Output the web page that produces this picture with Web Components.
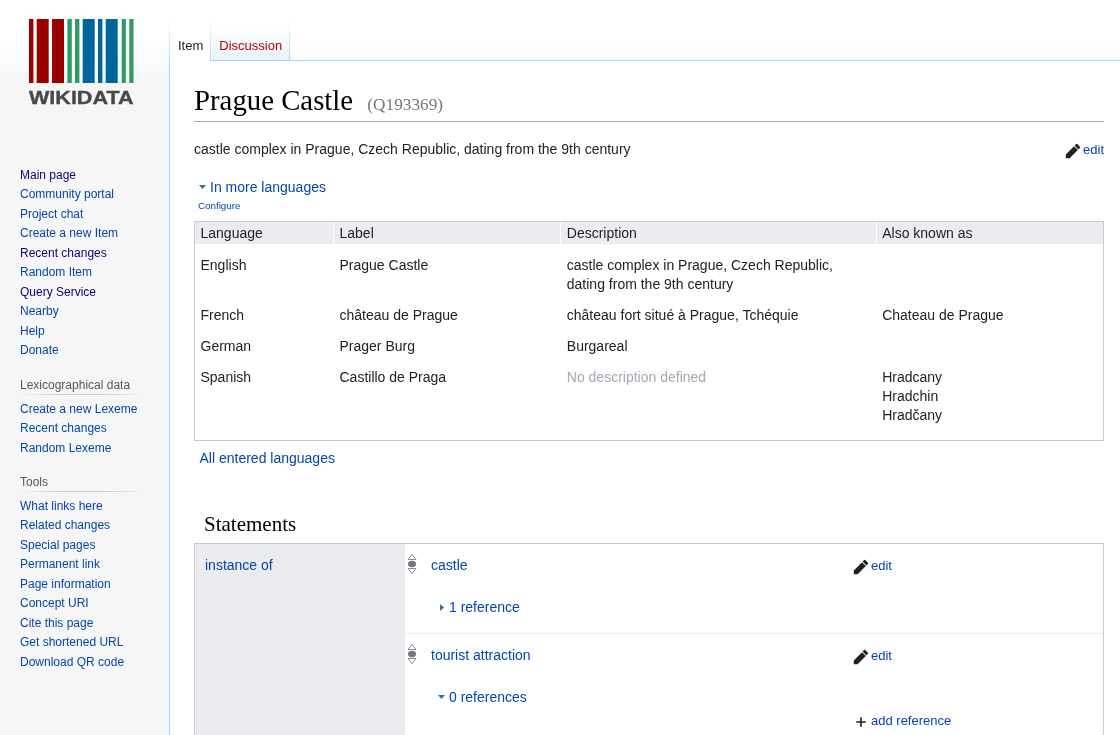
<!DOCTYPE html>
<html lang="en">
<head>
<meta charset="utf-8">
<title>Prague Castle - Wikidata</title>
<style>
html, body {
    margin: 0;
    height: 100%;
    overflow: hidden;
}
body {
    background: linear-gradient(#fff 50%, #f6f6f6 100%) 0 0 / 100% 80px no-repeat, #f6f6f6;
    font-family: "Liberation Sans", Arial, sans-serif;
    color: #222;
}
wd-page {
    will-change: opacity;
}
wd-term-row [slot] {
    display: block;
}
.muted {
    color: #a2a9b1;
}
</style>
</head>
<body>

<wd-page>
    <wd-sidebar slot="side">
        <wd-logo></wd-logo>
        <wd-portal>
            <a class="seen" href="#">Main page</a>
            <a href="#">Community portal</a>
            <a href="#">Project chat</a>
            <a href="#">Create a new Item</a>
            <a class="seen" href="#">Recent changes</a>
            <a href="#">Random Item</a>
            <a class="seen" href="#">Query Service</a>
            <a href="#">Nearby</a>
            <a href="#">Help</a>
            <a href="#">Donate</a>
        </wd-portal>
        <wd-portal heading="Lexicographical data">
            <a href="#">Create a new Lexeme</a>
            <a href="#">Recent changes</a>
            <a href="#">Random Lexeme</a>
        </wd-portal>
        <wd-portal heading="Tools">
            <a href="#">What links here</a>
            <a href="#">Related changes</a>
            <a href="#">Special pages</a>
            <a href="#">Permanent link</a>
            <a href="#">Page information</a>
            <a href="#">Concept URI</a>
            <a href="#">Cite this page</a>
            <a href="#">Get shortened URL</a>
            <a href="#">Download QR code</a>
        </wd-portal>
    </wd-sidebar>

    <wd-tabs slot="tabs"></wd-tabs>

    <wd-heading label="Prague Castle" qid="(Q193369)"></wd-heading>
    <wd-description>castle complex in Prague, Czech Republic, dating from the 9th century</wd-description>

    <wd-terms>
        <wd-term-row>
            <div slot="lang">English</div>
            <div slot="label">Prague Castle</div>
            <div slot="desc">castle complex in Prague, Czech Republic,<br>dating from the 9th century</div>
        </wd-term-row>
        <wd-term-row>
            <div slot="lang">French</div>
            <div slot="label">château de Prague</div>
            <div slot="desc">château fort situé à Prague, Tchéquie</div>
            <div slot="also">Chateau de Prague</div>
        </wd-term-row>
        <wd-term-row>
            <div slot="lang">German</div>
            <div slot="label">Prager Burg</div>
            <div slot="desc">Burgareal</div>
        </wd-term-row>
        <wd-term-row>
            <div slot="lang">Spanish</div>
            <div slot="label">Castillo de Praga</div>
            <div slot="desc" class="muted">No description defined</div>
            <div slot="also">Hradcany</div>
            <div slot="also">Hradchin</div>
            <div slot="also">Hradčany</div>
        </wd-term-row>
    </wd-terms>

    <wd-statement-group property="instance of">
        <wd-statement value="castle" refs="1 reference"></wd-statement>
        <wd-statement value="tourist attraction" refs="0 references" open></wd-statement>
    </wd-statement-group>
</wd-page>

<script>
const PENCIL = '<svg width="16" height="16" viewBox="0 0 20 20" fill="#202122"><path d="M16.77 8l1.94-2a1 1 0 0 0 0-1.41l-3.34-3.3a1 1 0 0 0-1.41 0L12 3.23zM11.3 3.95 1 14.25V19h4.75L16.05 8.7z"/></svg>';
const PLUS = '<svg width="16" height="16" viewBox="0 0 20 20" fill="#202122"><path d="M11 9V4H9v5H4v2h5v5h2v-5h5V9z"/></svg>';
const ARROW_DOWN = '<svg width="7" height="4" viewBox="0 0 7 4" fill="#2f6f9f"><path d="M0 0h7L3.5 4z"/></svg>';
const ARROW_RIGHT = '<svg width="4" height="7" viewBox="0 0 4 7" fill="#2f6f9f"><path d="M0 0v7l4-3.5z"/></svg>';

function define(name, html, setup) {
    const template = document.createElement('template');
    template.innerHTML = html;
    customElements.define(name, class extends HTMLElement {
        constructor() {
            super();
            this.attachShadow({ mode: 'open' });
            this.shadowRoot.appendChild(template.content.cloneNode(true));
        }
        connectedCallback() {
            if (setup) setup(this.shadowRoot, this);
        }
    });
}

define('wd-page', `
<style>
:host {
    display: grid;
    grid-template-columns: 169px 1fr;
    grid-template-rows: 61px 1fr;
    height: 100vh;
}
.side { grid-row: 1 / 3; }
.content {
    background: #fff;
    border-left: 1px solid #a7d7f9;
    padding: 20px 16px 24px 24px;
    min-width: 0;
}
</style>
<div class="side"><slot name="side"></slot></div>
<div><slot name="tabs"></slot></div>
<div class="content"><slot></slot></div>
`);

define('wd-sidebar', `
<style>
:host {
    display: block;
    font-size: 12px;
}
</style>
<slot></slot>
`);

define('wd-logo', `
<style>
:host {
    display: block;
    height: 165.75px;
}
svg { display: block; }
</style>
<svg width="169" height="110" viewBox="0 0 169 110">
    <g fill="#990000">
        <rect x="29" y="19" width="4.4" height="64"/>
        <rect x="36.7" y="19" width="12" height="64"/>
        <rect x="52" y="19" width="12" height="64"/>
    </g>
    <g fill="#339966">
        <rect x="67.4" y="19" width="4.4" height="64"/>
        <rect x="75" y="19" width="4.4" height="64"/>
        <rect x="121.7" y="19" width="4.2" height="64"/>
        <rect x="129.3" y="19" width="4.2" height="64"/>
    </g>
    <g fill="#006699">
        <rect x="82.7" y="19" width="12" height="64"/>
        <rect x="98" y="19" width="4.4" height="64"/>
        <rect x="105.7" y="19" width="12" height="64"/>
    </g>
    <text x="29" y="103.6" font-family="'Liberation Sans', Arial, sans-serif" font-weight="700" font-size="18" fill="#484848" stroke="#484848" stroke-width=".35" textLength="104.5" lengthAdjust="spacingAndGlyphs">WIKIDATA</text>
</svg>
`);

define('wd-portal', `
<style>
:host {
    display: block;
    margin-left: 20px;
}
h3 {
    margin: 15.4px 0 4.4px;
    font: inherit;
    line-height: 18px;
    color: #54595d;
    height: 18px;
    width: 125px;
    padding-bottom: 1px;
    background: linear-gradient(to right, rgba(200,204,209,0) 0, #c8ccd1 33%, #c8ccd1 66%, rgba(200,204,209,0) 100%) 0 100% / 100% 1px no-repeat;
}
.links { display: block; }
::slotted(a) {
    display: block;
    height: 13.5px;
    line-height: 13.5px;
    padding: 3px 0;
    color: #0645ad;
    text-decoration: none;
}
::slotted(a.seen) { color: #0b0080; }
</style>
<h3></h3>
<div class="links"><slot></slot></div>
`, (root, host) => {
    const h = root.querySelector('h3');
    if (host.hasAttribute('heading')) h.textContent = host.getAttribute('heading');
    else h.remove();
});

define('wd-tabs', `
<style>
:host {
    display: flex;
    height: 61px;
    font-size: 13px;
}
.break {
    width: 1px;
    background: linear-gradient(rgba(167,215,249,0) 30%, #a7d7f9 100%);
}
.tab {
    margin-top: 26px;
    box-sizing: border-box;
    height: 35px;
    padding: 12px 7px 0 8px;
    line-height: 15px;
}
.item {
    background: #fff;
    color: #222;
}
.talk {
    color: #ba0000;
    padding: 12px 7px 0 8px;
    background: linear-gradient(#fff, #e8f2f8);
    border-bottom: 1px solid #a7d7f9;
}
.rest {
    flex: 1;
    border-bottom: 1px solid #a7d7f9;
}
</style>
<div class="break"></div>
<div class="tab item">Item</div>
<div class="break"></div>
<div class="tab talk">Discussion</div>
<div class="break"></div>
<div class="rest"></div>
`);

define('wd-heading', `
<style>
:host {
    display: block;
    font-family: "Liberation Serif", "Times New Roman", serif;
    border-bottom: 1px solid #a2a9b1;
    box-sizing: content-box;
    height: 39px;
    padding-top: 1px;
    line-height: 37.5px;
    font-size: 28.8px;
    color: #000;
    white-space: nowrap;
}
.qid {
    font-size: 17.28px;
    color: #72777d;
    margin-left: 7px;
}
</style>
<span class="label"></span> <span class="qid"></span>
`, (root, host) => {
    root.querySelector('.label').textContent = host.getAttribute('label');
    root.querySelector('.qid').textContent = host.getAttribute('qid');
});

define('wd-edit-link', `
<style>
:host {
    display: inline-flex;
    gap: 2px;
    font-size: 13px;
    line-height: 19px;
}
.icon {
    width: 16px;
    height: 16px;
    margin-top: 3px;
}
svg { display: block; }
a {
    color: #0645ad;
    text-decoration: none;
}
</style>
<span class="icon"></span><a href="#"></a>
`, (root, host) => {
    root.querySelector('.icon').innerHTML = host.getAttribute('icon') === 'add' ? PLUS : PENCIL;
    root.querySelector('a').textContent = host.getAttribute('label') || 'edit';
});

define('wd-description', `
<style>
:host {
    display: flex;
    justify-content: space-between;
    margin-top: 17.5px;
    font-size: 14px;
    line-height: 19px;
}
</style>
<span><slot></slot></span>
<wd-edit-link></wd-edit-link>
`);

define('wd-terms', `
<style>
:host {
    display: block;
    font-size: 14px;
    line-height: 19px;
    margin-top: 19px;
}
a { color: #0645ad; text-decoration: none; }
.toggle {
    display: flex;
    align-items: center;
    gap: 4px;
    margin-left: 5px;
}
#arrow { display: block; }
#arrow svg { display: block; }
.configure {
    display: block;
    margin: 1px 0 0 4px;
    font-size: 9.8px;
    line-height: 15px;
}
.box {
    margin-top: 8px;
    border: 1px solid #c8ccd1;
    height: 218px;
}
.head {
    display: grid;
    grid-template-columns: 139px 227.3px 315.4px 1fr;
    background: #eaecf0;
    height: 22px;
    margin-bottom: 6.5px;
}
.head div {
    padding: 2.5px 5.5px 0;
    border-right: 1px solid #fff;
}
.head div:last-child { border-right: 0; }
.all {
    display: block;
    margin: 8px 0 0 5.5px;
}
</style>
<div class="toggle"><span id="arrow"></span><a href="#">In more languages</a></div>
<a class="configure" href="#">Configure</a>
<div class="box">
    <div class="head">
        <div>Language</div>
        <div>Label</div>
        <div>Description</div>
        <div>Also known as</div>
    </div>
    <slot></slot>
</div>
<a class="all" href="#">All entered languages</a>
`, root => {
    root.querySelector('#arrow').innerHTML = ARROW_DOWN;
});

define('wd-term-row', `
<style>
:host {
    display: grid;
    grid-template-columns: 139px 227.3px 315.4px 1fr;
}
div { padding: 6px 5.5px; }
</style>
<div><slot name="lang"></slot></div>
<div><slot name="label"></slot></div>
<div><slot name="desc"></slot></div>
<div><slot name="also"></slot></div>
`);

define('wd-statement-group', `
<style>
:host {
    display: block;
    margin-top: 41px;
    font-size: 14px;
    line-height: 19px;
}
h2 {
    margin: 0 0 3px 10px;
    font: 400 21px/31px "Liberation Serif", "Times New Roman", serif;
    color: #000;
}
.box {
    display: grid;
    grid-template-columns: 210px 1fr;
    border: 1px solid #c8ccd1;
}
.prop {
    background: #eaecf0;
    padding: 12px 10px;
}
a { color: #0645ad; text-decoration: none; }
</style>
<h2>Statements</h2>
<div class="box">
    <div class="prop"><a href="#"></a></div>
    <div><slot></slot></div>
</div>
`, (root, host) => {
    root.querySelector('.prop a').textContent = host.getAttribute('property');
});

define('wd-statement', `
<style>
:host {
    display: grid;
    grid-template-columns: 26px 422px 1fr;
    padding: 12px 0 16px;
    border-bottom: 1px solid #eaecf0;
}
a { color: #0645ad; text-decoration: none; }
.rank { padding: 0 0 0 2px; }
.rank svg { display: block; margin-top: -2px; }
.refs {
    grid-column: 2 / 4;
    display: flex;
    align-items: center;
    margin-top: 23px;
    height: 19px;
}
.refs .arrow {
    box-sizing: border-box;
    width: 18px;
    padding-right: 4px;
    display: flex;
    justify-content: flex-end;
}
.refs .arrow.closed { padding-right: 5px; }
.add {
    grid-column: 3;
    margin-top: 4px;
}
svg { display: block; }
</style>
<div class="rank">
    <svg width="10" height="21" viewBox="0 0 10 21" fill="none" stroke="#888">
        <path d="M1 5.5 5 .5l4 5z"/>
        <ellipse cx="5" cy="10" rx="4" ry="3.3" fill="#72777d" stroke="none"/>
        <path d="M1 14.5h8L5 19.5z"/>
    </svg>
</div>
<a class="value" href="#"></a>
<wd-edit-link></wd-edit-link>
<div class="refs"><span class="arrow"></span><a class="count" href="#"></a></div>
`, (root, host) => {
    root.querySelector('.value').textContent = host.getAttribute('value');
    root.querySelector('.count').textContent = host.getAttribute('refs');
    const open = host.hasAttribute('open');
    const arrow = root.querySelector('.arrow');
    arrow.innerHTML = open ? ARROW_DOWN : ARROW_RIGHT;
    if (open) {
        const add = document.createElement('wd-edit-link');
        add.className = 'add';
        add.setAttribute('icon', 'add');
        add.setAttribute('label', 'add reference');
        root.appendChild(add);
    } else {
        arrow.classList.add('closed');
    }
});
</script>
</body>
</html>
